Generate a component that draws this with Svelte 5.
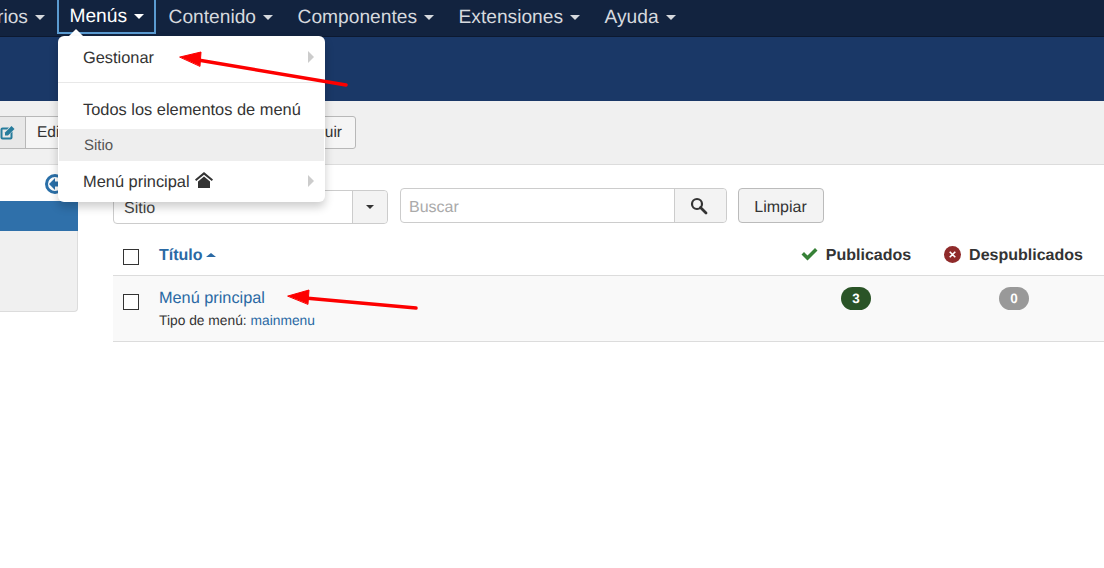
<script>
  const navItems = ['Usuarios', 'Menús', 'Contenido', 'Componentes', 'Extensiones', 'Ayuda'];
</script>

<div class="page">
  <nav class="navbar">
    {#each navItems as item, i}
      <span class="nav-item" class:active={i === 1}>
        {item}<i class="caret"></i>
      </span>
    {/each}
    <i class="nav-notch"></i>
  </nav>
  <div class="subhead"></div>

  <div class="toolbar">
    <div class="tool-btn">
      <span class="tool-icon">
        <svg width="15" height="15" viewBox="0 0 15 15">
          <path d="M2.500 2.500h6.500l-2 2H2.500v8h8V8.500l2-2v6a2 2 0 0 1-2 2h-8a2 2 0 0 1-2-2v-8a2 2 0 0 1 2-2z" fill="#277c9c" />
          <path d="M5 7.500 11.500 1 14.500 4 8 10.500H5z" fill="#277c9c" />
        </svg>
      </span>
      <span class="tool-label">Editar</span>
    </div>
    <div class="tool-btn second">Reconstruir</div>
  </div>

  <div class="body">
    <aside class="sidebar">
      <div class="side-toggle">
        <svg width="20" height="20" viewBox="0 0 20 20">
          <circle cx="10" cy="10" r="8.500" fill="#fff" stroke="#2a6fa8" stroke-width="3" />
          <path d="M10 4 4 10l6 6v-3.500h6v-5h-6z" fill="#2a6fa8" />
        </svg>
      </div>
      <div class="side-active"></div>
    </aside>

    <main class="main">
      <div class="filters">
        <div class="select">
          <span class="select-value">Sitio</span>
          <span class="select-arrow"><i class="caret dark"></i></span>
        </div>
        <div class="search">
          <span class="placeholder">Buscar</span>
          <span class="search-btn">
            <svg width="18" height="18" viewBox="0 0 18 18">
              <circle cx="7" cy="7" r="5" fill="none" stroke="#333" stroke-width="2.200" />
              <path d="M10.500 10.500 16 16" stroke="#333" stroke-width="2.800" stroke-linecap="round" />
            </svg>
          </span>
        </div>
        <div class="clear-btn">Limpiar</div>
      </div>

      <div class="row head">
        <span class="check"></span>
        <span class="title-col"><b class="sort">Título</b><i class="caret up"></i></span>
        <span class="col pub">
          <svg width="17" height="14" viewBox="0 0 17 14">
            <path d="M0.500 7.500 3 5 6.500 8.500 14 1 16.500 3.500 6.500 13.500z" fill="#378137" />
          </svg>
          <b>Publicados</b>
        </span>
        <span class="col unpub">
          <svg width="17" height="17" viewBox="0 0 17 17">
            <circle cx="8.500" cy="8.500" r="8.500" fill="#8f2a2a" />
            <path d="M5.700 5.700l5.600 5.600M11.300 5.700l-5.600 5.600" stroke="#fff" stroke-width="1.600" />
          </svg>
          <b>Despublicados</b>
        </span>
      </div>

      <div class="row item">
        <span class="check"></span>
        <div class="title-col">
          <div class="item-title">Menú principal</div>
          <div class="item-type">Tipo de menú: <span class="link">mainmenu</span></div>
        </div>
        <span class="col pub"><span class="badge green">3</span></span>
        <span class="col unpub"><span class="badge grey">0</span></span>
      </div>
    </main>
  </div>

  <div class="dropdown">
    <div class="dd-item">Gestionar<i class="sub-arrow"></i></div>
    <div class="dd-divider"></div>
    <div class="dd-item">Todos los elementos de menú</div>
    <div class="dd-header">Sitio</div>
    <div class="dd-item">
      <span class="dd-home">Menú principal
        <svg class="home" width="18" height="16" viewBox="0 0 18 16">
          <path d="M9 0 0 7.500 1.200 9 9 2.700 16.800 9 18 7.500z" fill="#333" />
          <path d="M3 9.500 9 4.500l6 5V16H3z" fill="#333" />
        </svg>
      </span>
      <i class="sub-arrow"></i>
    </div>
  </div>

  <svg class="arrows" width="1104" height="568" viewBox="0 0 1104 568">
    <g fill="#fd0000" stroke="#fd0000" stroke-linecap="round">
      <path d="M346 85 198 60" stroke-width="3.500" fill="none" />
      <path d="M180 57 201 52 200 66z" stroke-width="1" />
      <path d="M416 308 305 298" stroke-width="3.500" fill="none" />
      <path d="M288 296 309 290 308 304z" stroke-width="1" />
    </g>
  </svg>
</div>

<style>
  :global(body) {
    margin: 0;
    background: #fff;
    overflow: hidden;
  }

  .page {
    position: relative;
    height: 568px;
    overflow: hidden;
    font-family: "Liberation Sans", Arial, sans-serif;
    text-rendering: geometricPrecision;
    color: #333;
  }

  .navbar {
    position: relative;
    display: flex;
    height: 36px;
    background: #12233f;
    border-bottom: 1px solid #0c1930;
    margin-left: -60px;
  }

  .nav-item {
    display: flex;
    align-items: center;
    box-sizing: border-box;
    height: 34px;
    padding: 1px 12.250px 0;
    font-size: 19.200px;
    color: #d6d9de;
    white-space: nowrap;
  }

  .nav-item.active {
    color: #fff;
    border: 2px solid #5b9bd1;
    border-top-width: 0;
    padding: 1px 10.250px 0;
  }

  .nav-notch {
    position: absolute;
    left: 129px;
    top: 29px;
    border-left: 7px solid transparent;
    border-right: 7px solid transparent;
    border-bottom: 7px solid #fff;
  }

  .caret {
    display: inline-block;
    width: 0;
    height: 0;
    margin-left: 7px;
    border-left: 5.500px solid transparent;
    border-right: 5.500px solid transparent;
    border-top: 5px solid currentColor;
  }

  .caret.dark {
    margin: 0;
    border-left-width: 4.500px;
    border-right-width: 4.500px;
    border-top-width: 4px;
    color: #333;
  }

  .caret.up {
    margin: 0 0 3px 3px;
    border-left-width: 5px;
    border-right-width: 5px;
    border-top: 0;
    border-bottom: 4px solid #2a69a4;
  }

  .subhead {
    height: 64px;
    background: #1a3867;
  }

  .toolbar {
    display: flex;
    gap: 5px;
    height: 64px;
    box-sizing: border-box;
    padding-top: 15px;
    background: #f0f0f0;
    border-bottom: 1px solid #dcdcdc;
  }

  .tool-btn {
    display: flex;
    align-items: center;
    height: 33px;
    box-sizing: border-box;
    border: 1px solid #b8b8b8;
    border-radius: 3px;
    background: #f5f5f5;
    font-size: 15.500px;
    white-space: nowrap;
  }

  .tool-btn:first-child {
    margin-left: -16px;
    width: 200px;
    overflow: hidden;
  }

  .tool-icon {
    display: flex;
    align-items: center;
    justify-content: flex-end;
    flex: none;
    width: 41px;
    height: 100%;
    padding-right: 10px;
    box-sizing: border-box;
    background: #e8e8e8;
    border-right: 1px solid #b8b8b8;
  }

  .tool-label {
    padding-left: 11px;
  }

  .tool-btn.second {
    flex: none;
    width: 167px;
    justify-content: flex-end;
    padding-right: 13px;
  }

  .body {
    display: flex;
  }

  .sidebar {
    flex: none;
    box-sizing: border-box;
    width: 78px;
    height: 147px;
    background: #f0f0f0;
    border: 1px solid #dcdcdc;
    border-top: 0;
    border-left: 0;
    border-bottom-right-radius: 4px;
  }

  .side-toggle {
    display: flex;
    justify-content: flex-end;
    height: 36px;
    padding: 9px 12px 0 0;
    box-sizing: border-box;
    background: #fff;
  }

  .side-active {
    height: 30px;
    margin-right: -1px;
    background: #2f70aa;
  }

  .main {
    flex: 1;
    margin-left: 35px;
    min-width: 0;
  }

  .filters {
    display: flex;
    align-items: flex-start;
    height: 72px;
    padding-top: 23px;
    box-sizing: border-box;
  }

  .select {
    display: flex;
    box-sizing: border-box;
    width: 275px;
    height: 34px;
    margin-top: 2px;
    border: 1px solid #ccc;
    border-radius: 4px;
    font-size: 16px;
  }

  .select-value {
    flex: 1;
    padding: 9px 12px 0 10px;
    color: #444;
  }

  .select-arrow {
    display: flex;
    align-items: center;
    justify-content: center;
    width: 34px;
    background: #f3f3f3;
    border-left: 1px solid #ccc;
    border-radius: 0 4px 4px 0;
  }

  .search {
    display: flex;
    box-sizing: border-box;
    width: 327px;
    height: 35px;
    margin-left: 12px;
    border: 1px solid #ccc;
    border-radius: 4px;
    font-size: 16px;
  }

  .placeholder {
    flex: 1;
    padding: 10px 0 0 8px;
    color: #aaa;
  }

  .search-btn {
    display: flex;
    align-items: center;
    justify-content: center;
    box-sizing: border-box;
    width: 52px;
    padding-right: 4px;
    background: #f3f3f3;
    border-left: 1px solid #ccc;
    border-radius: 0 4px 4px 0;
  }

  .clear-btn {
    box-sizing: border-box;
    width: 86px;
    height: 35px;
    margin-left: 11px;
    padding: 10px 1px 0 0;
    text-align: center;
    font-size: 16px;
    background: #f3f3f3;
    border: 1px solid #bbb;
    border-radius: 4px;
  }

  .row {
    display: flex;
    align-items: flex-start;
    border-bottom: 1px solid #dcdcdc;
    font-size: 16px;
  }

  .row.head {
    height: 39px;
    box-sizing: border-box;
    padding-top: 10px;
  }

  .row.item {
    height: 66px;
    box-sizing: border-box;
    padding-top: 12px;
    background: #f9f9f9;
  }

  .check {
    flex: none;
    width: 14px;
    height: 14px;
    margin: 2px 0 0 10px;
    border: 1px solid #333;
    background: #fff;
  }

  .row.item .check {
    margin-top: 6px;
  }

  .title-col {
    flex: 1;
    margin-left: 20px;
  }

  .sort {
    color: #2a69a4;
  }

  .head .title-col {
    display: flex;
    align-items: center;
  }

  .item-title {
    margin-top: 1px;
    font-size: 16.300px;
    color: #2a69a4;
  }

  .item-type {
    margin-top: 5px;
    font-size: 13.800px;
  }

  .link {
    color: #2a69a4;
  }

  .col {
    display: flex;
    align-items: center;
    justify-content: center;
    gap: 8px;
    white-space: nowrap;
  }

  .head .col svg {
    margin-top: -4px;
  }

  .col.pub {
    width: 136px;
  }

  .col.unpub {
    box-sizing: border-box;
    width: 180px;
  }

  .head .col.unpub {
    padding-right: 1px;
  }

  .row.item .col {
    margin-top: -1px;
  }

  .badge {
    display: block;
    width: 30px;
    height: 23px;
    line-height: 23px;
    text-align: center;
    border-radius: 12px;
    color: #fff;
    font-size: 13.500px;
    font-weight: bold;
  }

  .green {
    background: #2a5427;
  }

  .grey {
    background: #999;
  }

  .dropdown {
    position: absolute;
    left: 58px;
    top: 36px;
    width: 267px;
    height: 166px;
    box-sizing: border-box;
    padding-top: 5px;
    background: #fff;
    border-radius: 6px;
    box-shadow: 0 5px 10px rgba(0, 0, 0, 0.2);
    font-size: 16.400px;
  }

  .dd-item {
    display: flex;
    align-items: center;
    justify-content: space-between;
    box-sizing: border-box;
    height: 32px;
    padding: 2px 11px 0 25px;
    color: #333;
  }

  .dd-divider {
    height: 1px;
    margin: 9px 0 10px;
    background: #e8e8e8;
  }

  .dd-header {
    height: 32px;
    line-height: 33px;
    margin: 4px 1px;
    padding-left: 25px;
    background: #eee;
    font-size: 15px;
    color: #555;
  }

  .dd-home {
    display: flex;
    align-items: center;
    gap: 5px;
  }

  .home {
    margin-top: -5px;
  }

  .sub-arrow {
    margin-top: -2px;
    border-left: 6px solid #ccc;
    border-top: 6px solid transparent;
    border-bottom: 6px solid transparent;
  }

  .arrows {
    position: absolute;
    left: 0;
    top: 0;
    pointer-events: none;
  }
</style>
